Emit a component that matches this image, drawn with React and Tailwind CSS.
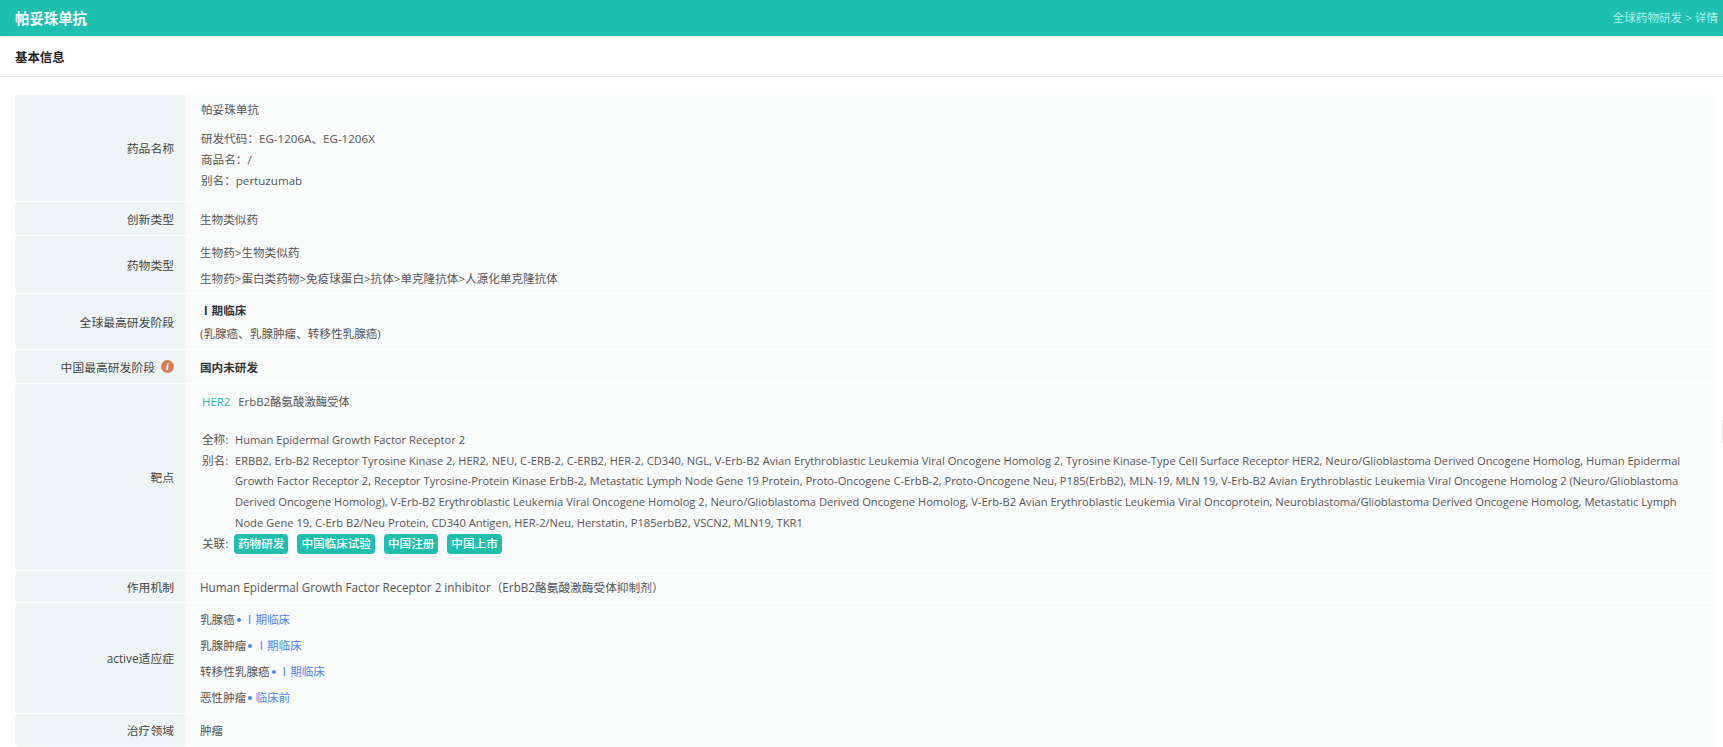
import React from "react";

const FONT = "[font-family:'Open_Sans','Noto_Sans_CJK_SC',sans-serif]";

const Row = ({ label, children, info }) => (
  <div className="flex mb-px">
    <div className="w-[171px] shrink-0 flex items-center justify-end pr-3 pt-[2px] bg-[#eef6f5] rounded-l-[4px] text-[11.8px] text-[#444]">
      {label}
      {info && (
        <span className="ml-[6px] -mt-[3px] w-[13px] h-[13px] rounded-full bg-[#cf7f58] text-white text-[10px] italic font-bold [font-family:'Liberation_Serif',serif] flex items-center justify-center">i</span>
      )}
    </div>
    <div className="flex-1 min-w-0">{children}</div>
  </div>
);

const Cell = ({ className = "", children }) => (
  <div className={`bg-[#fafbfb] pl-[14px] pr-3 ${className}`}>{children}</div>
);

const Stage = ({ name, stage }) => (
  <p className="h-[26px] leading-[26px] flex items-center">
    {name}
    <span className="w-1 h-1 rounded-full bg-[#4d86f0] ml-[2px] mr-[3px]" />
    <span className="text-[#4d86f0]">{stage}</span>
  </p>
);

export default function App() {
  return (
    <div className={`h-screen overflow-hidden bg-[#f5f6f6] text-[11.6px] text-[#555] ${FONT}`}>
      <header className="h-9 bg-[#1fbfb0] flex items-center justify-between pl-[15px] pr-[5px]">
        <h1 className="text-[14.4px] font-bold text-white pt-px">帕妥珠单抗</h1>
        <span className="text-[#a8f5ec]">全球药物研发 &gt; 详情</span>
      </header>
      <div className="mt-[2px] h-full bg-white rounded-t-[4px]">
        <div className="h-[39px] pl-[15px] pt-[2px] flex items-center border-b border-[#e8e8e8] text-[12.4px] font-bold text-[#222]">基本信息</div>
        <main className="pt-[18px] pl-[15px] pr-[9px]">
          <Row label="药品名称">
            <Cell className="h-[28px] leading-[30px] mb-px pl-[15px]">帕妥珠单抗</Cell>
            <Cell className="h-[77px] pt-[4px] leading-[21px] pl-[15px]">
              <p>研发代码：EG-1206A、EG-1206X</p>
              <p>商品名：/</p>
              <p>别名：pertuzumab</p>
            </Cell>
          </Row>
          <Row label="创新类型">
            <Cell className="h-[33px] leading-[35px]">生物类似药</Cell>
          </Row>
          <Row label="药物类型">
            <Cell className="h-[57px] pt-[4px] leading-[26px]">
              <p>生物药&gt;生物类似药</p>
              <p>生物药&gt;蛋白类药物&gt;免疫球蛋白&gt;抗体&gt;单克隆抗体&gt;人源化单克隆抗体</p>
            </Cell>
          </Row>
          <Row label="全球最高研发阶段">
            <Cell className="h-[55px] pt-[5px] leading-[23px]">
              <p className="font-bold text-[#333]">Ⅰ期临床</p>
              <p>(乳腺癌、乳腺肿瘤、转移性乳腺癌)</p>
            </Cell>
          </Row>
          <Row label="中国最高研发阶段" info>
            <Cell className="h-[33px] leading-[35px] font-bold text-[#333]">国内未研发</Cell>
          </Row>
          <Row label="靶点">
            <Cell className="h-[33px] mb-px leading-[35px] text-[11.4px]">
              <span className="text-[#1fbfb0] ml-[2px]">HER2</span>
              <span className="ml-[8px]">ErbB2酪氨酸激酶受体</span>
            </Cell>
            <Cell className="h-[152px] pt-[12px] pr-[22px] leading-[20.7px]">
              <div className="flex">
                <span className="w-[33px] shrink-0 ml-[2px]">全称:</span>
                <span className="text-[11.15px]">Human Epidermal Growth Factor Receptor 2</span>
              </div>
              <div className="flex">
                <span className="w-[33px] shrink-0 ml-[2px]">别名:</span>
                <span className="text-[11.15px]">ERBB2, Erb-B2 Receptor Tyrosine Kinase 2, HER2, NEU, C-ERB-2, C-ERB2, HER-2, CD340, NGL, V-Erb-B2 Avian Erythroblastic Leukemia Viral Oncogene Homolog 2, Tyrosine Kinase-Type Cell Surface Receptor HER2, Neuro/Glioblastoma Derived Oncogene Homolog, Human Epidermal Growth Factor Receptor 2, Receptor Tyrosine-Protein Kinase ErbB-2, Metastatic Lymph Node Gene 19 Protein, Proto-Oncogene C-ErbB-2, Proto-Oncogene Neu, P185(ErbB2), MLN-19, MLN 19, V-Erb-B2 Avian Erythroblastic Leukemia Viral Oncogene Homolog 2 (Neuro/Glioblastoma Derived Oncogene Homolog), V-Erb-B2 Erythroblastic Leukemia Viral Oncogene Homolog 2, Neuro/Glioblastoma Derived Oncogene Homolog, V-Erb-B2 Avian Erythroblastic Leukemia Viral Oncoprotein, Neuroblastoma/Glioblastoma Derived Oncogene Homolog, Metastatic Lymph Node Gene 19, C-Erb B2/Neu Protein, CD340 Antigen, HER-2/Neu, Herstatin, P185erbB2, VSCN2, MLN19, TKR1</span>
              </div>
              <div className="flex items-center">
                <span className="w-[32px] shrink-0 ml-[2px]">关联:</span>
                {["药物研发", "中国临床试验", "中国注册", "中国上市"].map((t) => (
                  <span key={t} className="h-5 leading-5 px-[4px] mr-[9px] rounded-[4px] bg-[#1fbfb0] text-white font-medium">{t}</span>
                ))}
              </div>
            </Cell>
          </Row>
          <Row label="作用机制">
            <Cell className="h-[31px] leading-[33px] text-[11.7px]">Human Epidermal Growth Factor Receptor 2 inhibitor（ErbB2酪氨酸激酶受体抑制剂）</Cell>
          </Row>
          <Row label="active适应症">
            <Cell className="h-[110px] pt-[4px]">
              <Stage name="乳腺癌" stage="Ⅰ期临床" />
              <Stage name="乳腺肿瘤" stage="Ⅰ期临床" />
              <Stage name="转移性乳腺癌" stage="Ⅰ期临床" />
              <Stage name="恶性肿瘤" stage="临床前" />
            </Cell>
          </Row>
          <Row label="治疗领域">
            <Cell className="h-[31px] leading-[33px]">肿瘤</Cell>
          </Row>
          <Row label="">
            <Cell className="h-[31px]" />
          </Row>
        </main>
      </div>
      <div className="fixed right-0 top-[420px] w-px h-[23px] bg-[#e4e4e4]" />
    </div>
  );
}
